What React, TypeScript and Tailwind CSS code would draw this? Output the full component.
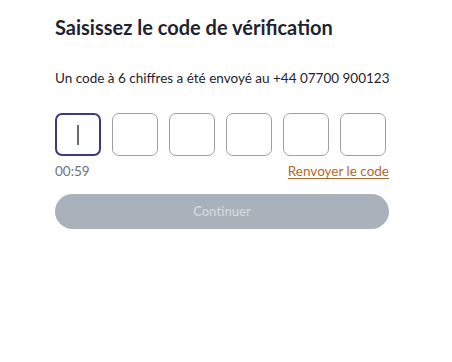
import React from 'react';

export default function App() {
  const digits = [0, 1, 2, 3, 4, 5];

  return (
    <div className="w-[452px] h-[362px] bg-white" style={{ fontFamily: 'Lato, "Noto Sans", sans-serif' }}>
      <div className="pl-[55px] pr-[63px] pt-[13px]">
        <h1 className="text-[20px] leading-[28px] font-bold text-[#1f2330]">Saisissez le code de vérification</h1>
        <p className="mt-[27px] text-[13.5px] leading-[20px] text-[#1f2330] whitespace-nowrap">
          Un code à 6 chiffres a été envoyé au +44 07700 900123
        </p>

        <div className="mt-[25px] flex gap-[11px]">
          {digits.map((i) => (
            <div
              key={i}
              className={
                i === 0
                  ? 'w-[46px] h-[43px] rounded-[7px] border-2 border-[#3b3889] flex items-center justify-center'
                  : 'w-[46px] h-[43px] rounded-[7px] border border-[#9ca0a6] flex items-center justify-center'
              }
            >
              {i === 0 && <span className="block w-[2px] h-[20px] bg-[#6b6b6b]" />}
            </div>
          ))}
        </div>

        <div className="mt-[6px] flex justify-between items-center text-[13.5px] leading-[18px]">
          <span className="text-[#6b7280]">00:59</span>
          <span className="text-[#b8652a] underline underline-offset-2">Renvoyer le code</span>
        </div>

        <button className="mt-[14px] w-full h-[35px] rounded-full bg-[#a9b1bb] text-[#d3d7dc] text-[13px] font-semibold">
          Continuer
        </button>
      </div>
    </div>
  );
}
